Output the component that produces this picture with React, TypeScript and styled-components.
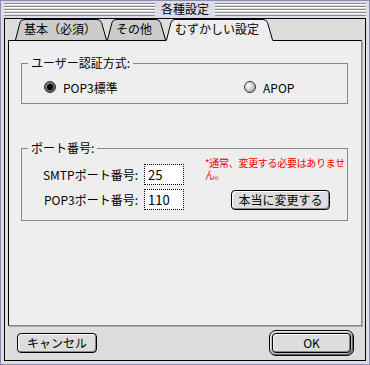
import * as React from 'react'
import styled, { createGlobalStyle } from 'styled-components'

const GlobalStyle = createGlobalStyle`
	html, body {
		margin: 0;
		padding: 0;
		background: #dddde6;
	}
	body {
		font-family: 'Noto Sans CJK JP', 'Noto Sans', sans-serif;
		font-size: 12px;
		color: #000;
	}
`

const Window = styled.div`
	box-sizing: border-box;
	width: 370px;
	height: 365px;
	border: 1px solid #8c8cac;
	background: #dcdce8;
	padding: 0 3px 3px 3px;
	display: flex;
	flex-direction: column;
`

const TitleBar = styled.div`
	height: 17px;
	display: flex;
	align-items: center;
	justify-content: center;
	background: repeating-linear-gradient(
		to bottom,
		#dcdce8 0px,
		#dcdce8 1px,
		#8a8a8a 1px,
		#8a8a8a 2px,
		#ffffff 2px,
		#ffffff 3px
	);
	background-size: 100% 3px;
	background-position: 0 1px;
	background-clip: content-box;
	padding: 1px 0 2px;
	box-sizing: border-box;
`

const Title = styled.div`
	background: #dcdce8;
	padding: 0 6px;
	line-height: 16px;
	font-size: 12px;
`

const Body = styled.div`
	flex: 1;
	border: 1px solid #000;
	background: #dddddd;
	display: flex;
	flex-direction: column;
	min-height: 0;
`

const TabRow = styled.div`
	height: 22px;
	margin-bottom: -1px;
	padding-left: 10px;
	display: flex;
	align-items: flex-start;
	position: relative;
	z-index: 1;
`

const TabBox = styled.div<{ $w: number; $active?: boolean }>`
	position: relative;
	width: ${p => p.$w}px;
	height: ${p => (p.$active ? 22 : 21)}px;
	flex: none;
	svg {
		position: absolute;
		left: 0;
		top: 0;
	}
`

const TabLabel = styled.span`
	position: relative;
	display: block;
	padding-left: 9px;
	line-height: 20px;
	font-size: 12px;
	white-space: nowrap;
`

type TabProps = { label: string; width: number; active?: boolean }
const Tab: React.FC<TabProps> = ({ label, width, active }) => {
	const h = 21
	const w = width
	const d = `M0.5,${h} L5,3.5 Q6,0.5 9,0.5 L${w - 10},0.5 Q${w - 7},0.5 ${w - 5.5},3.5 L${w - 0.5},${h}`
	return (
		<TabBox $w={w} $active={active}>
			<svg width={w} height={active ? 22 : 21}>
				<path d={d + (active ? ` L${w - 0.5},22 L0.5,22 Z` : ' Z')} fill={active ? '#eeeeee' : '#cccccc'} stroke="none" />
				<path d={d} fill="none" stroke="#000" strokeWidth={1} />
			</svg>
			<TabLabel>{label}</TabLabel>
		</TabBox>
	)
}

const Panel = styled.div`
	flex: 1;
	margin: 0 3px 0 3px;
	background: #eeeeee;
	border-top: 1px solid #000;
	border-left: 1px solid #000;
	border-right: 1px solid #888;
	border-bottom: 1px solid #888;
	box-shadow: 1px 1px 0 #aaa;
	padding: 15px 13px 0 12px;
	display: flex;
	flex-direction: column;
`

const Group = styled.fieldset<{ $gap?: number }>`
	margin: 0 0 ${p => p.$gap || 0}px 0;
	padding: 0;
	border: 1px solid #888;
	min-width: 0;
`

const Legend = styled.legend`
	margin-left: 6px;
	padding: 0 3px;
	line-height: 14px;
	font-size: 12px;
`

const RadioRow = styled.div`
	display: grid;
	grid-template-columns: 200px auto;
	padding: 9px 0 8px 22px;
`

const RadioItem = styled.label`
	display: flex;
	align-items: center;
	gap: 7px;
	height: 16px;
	font-size: 12px;
`

const RadioDot = styled.span<{ $on?: boolean }>`
	box-sizing: border-box;
	width: 12px;
	height: 12px;
	border-radius: 50%;
	border: 1px solid #333;
	display: flex;
	align-items: center;
	justify-content: center;
	background: ${p =>
		p.$on
			? 'radial-gradient(circle at 40% 40%, #999 0%, #555 70%)'
			: 'radial-gradient(circle at 35% 35%, #ffffff 0%, #d0d0d0 45%, #8a8a8a 100%)'};
	&::after {
		content: '';
		display: ${p => (p.$on ? 'block' : 'none')};
		width: 6px;
		height: 6px;
		border-radius: 50%;
		background: #000;
	}
`

const PortArea = styled.div`
	display: flex;
	padding: 2px 0 10px 0;
`

const PortFields = styled.div`
	display: grid;
	grid-template-columns: 116px 40px;
	column-gap: 6px;
	row-gap: 3px;
	padding-top: 6px;
	align-items: center;
`

const PortLabel = styled.span`
	text-align: right;
	font-size: 12px;
	white-space: nowrap;
`

const PortInput = styled.input`
	box-sizing: border-box;
	width: 40px;
	height: 21px;
	border: 1px dotted #000;
	background: #fff;
	padding: 0 3px;
	font-family: 'Noto Sans CJK JP', 'Noto Sans', sans-serif;
	font-size: 13px;
	outline: none;
`

const Side = styled.div`
	margin-left: 21px;
	display: flex;
	flex-direction: column;
`

const Note = styled.div`
	color: #ff0000;
	font-size: 10px;
	line-height: 12px;
	letter-spacing: -0.3px;
	white-space: nowrap;
`

const Button = styled.button<{ $w: number }>`
	box-sizing: border-box;
	width: ${p => p.$w}px;
	height: 20px;
	border: 1px solid #000;
	border-radius: 4px;
	background: #dddddd;
	box-shadow: inset 1px 1px 0 #fff, inset -1px -1px 0 #888;
	font-family: 'Noto Sans CJK JP', 'Noto Sans', sans-serif;
	font-size: 12px;
	color: #000;
	padding: 0;
	line-height: 18px;
`

const ChangeButton = styled(Button)`
	margin: 9px 0 0 26px;
`

const Footer = styled.div`
	height: 34px;
	display: flex;
	align-items: center;
	justify-content: space-between;
	padding: 0 11px 0 12px;
`

const DefaultRing = styled.div`
	box-sizing: border-box;
	border: 1px solid #000;
	border-radius: 7px;
	padding: 2px;
	background: #bbbbbb;
	box-shadow: inset 1px 1px 0 #eee, inset -1px -1px 0 #666;
`

const App: React.FC = () => (
	<>
		<GlobalStyle />
		<Window>
			<TitleBar>
				<Title>各種設定</Title>
			</TitleBar>
			<Body>
				<TabRow>
					<Tab label="基本（必須）" width={92} />
					<Tab label="その他" width={59} />
					<Tab label="むずかしい設定" width={107} active />
				</TabRow>
				<Panel>
					<Group $gap={37}>
						<Legend>ユーザー認証方式:</Legend>
						<RadioRow>
							<RadioItem>
								<RadioDot $on />
								POP3標準
							</RadioItem>
							<RadioItem>
								<RadioDot />
								APOP
							</RadioItem>
						</RadioRow>
					</Group>
					<Group>
						<Legend>ポート番号:</Legend>
						<PortArea>
							<PortFields>
								<PortLabel>SMTPポート番号:</PortLabel>
								<PortInput defaultValue="25" />
								<PortLabel>POP3ポート番号:</PortLabel>
								<PortInput defaultValue="110" />
							</PortFields>
							<Side>
								<Note>
									*通常、変更する必要はありませ
									<br />
									ん。
								</Note>
								<ChangeButton $w={99}>本当に変更する</ChangeButton>
							</Side>
						</PortArea>
					</Group>
				</Panel>
				<Footer>
					<Button $w={80}>キャンセル</Button>
					<DefaultRing>
						<Button $w={79}>OK</Button>
					</DefaultRing>
				</Footer>
			</Body>
		</Window>
	</>
)

export default App
